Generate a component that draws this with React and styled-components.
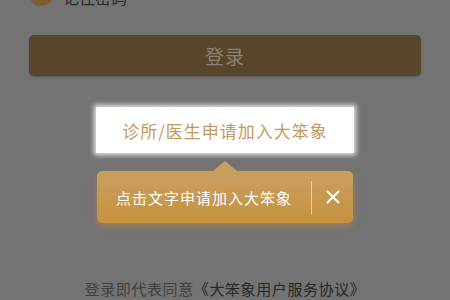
import React from "react";
import styled, { createGlobalStyle } from "styled-components";

const Global = createGlobalStyle`
  html, body { margin: 0; padding: 0; background: #737373; }
  body { font-family: "Noto Sans CJK SC", "Noto Sans", sans-serif; }
  * { box-sizing: border-box; }
`;

const Screen = styled.div`
  width: 450px;
  height: 300px;
  overflow: hidden;
  background: #737373;
  display: flex;
  flex-direction: column;
`;

const RememberRow = styled.div`
  display: flex;
  align-items: center;
  gap: 10px;
  height: 24px;
  margin: -18px 0 0 29px;
`;

const CheckCircle = styled.span`
  width: 24px;
  height: 24px;
  border-radius: 50%;
  background: #7a5f34;
  display: flex;
  align-items: center;
  justify-content: center;
`;

const RememberText = styled.span`
  font-size: 16px;
  line-height: 24px;
  color: #262626;
  margin-top: 5px;
`;

const LoginButton = styled.button`
  margin: 29px 29px 0;
  height: 41px;
  border: none;
  border-radius: 5px;
  background: #58462a;
  box-shadow: 0 1px 2px rgba(0, 0, 0, 0.25);
  color: #8b8276;
  font-family: inherit;
  font-size: 19px;
  letter-spacing: 1px;
  display: flex;
  align-items: center;
  justify-content: center;
  padding: 0;
`;

const Spotlight = styled.div`
  align-self: center;
  margin-top: 31px;
  width: 258px;
  height: 46px;
  background: #ffffff;
  box-shadow: 0 0 5px 2px rgba(255, 255, 255, 0.85);
  display: flex;
  align-items: center;
  justify-content: center;
  color: #c49a5c;
  font-size: 17px;
  letter-spacing: 1px;
`;

const Tip = styled.div`
  align-self: center;
  margin-top: 8px;
  display: flex;
  flex-direction: column;
  align-items: center;
`;

const Arrow = styled.div`
  width: 0;
  height: 0;
  border-left: 12px solid transparent;
  border-right: 12px solid transparent;
  border-bottom: 10px solid #c9a062;
`;

const TipBox = styled.div`
  width: 256px;
  height: 52px;
  border-radius: 5px;
  background: linear-gradient(180deg, #c9a062 0%, #c6913d 100%);
  box-shadow: 0 3px 8px rgba(205, 150, 60, 0.45);
  display: flex;
  align-items: center;
  padding-left: 19px;
`;

const TipText = styled.span`
  flex: 1;
  color: #ffffff;
  font-size: 15px;
  letter-spacing: 1px;
`;

const Divider = styled.span`
  width: 1px;
  height: 33px;
  background: rgba(245, 225, 185, 0.75);
`;

const CloseButton = styled.span`
  width: 41px;
  display: flex;
  align-items: center;
  justify-content: center;
`;

const Footer = styled.div`
  margin-top: auto;
  height: 22px;
  line-height: 22px;
  text-align: center;
  font-size: 15px;
  letter-spacing: 0.6px;
  color: #3f3f3f;
  padding-bottom: 1px;
`;

const Agreement = styled.span`
  color: #262626;
`;

export default function App() {
  return (
    <>
      <Global />
      <Screen>
        <RememberRow>
          <CheckCircle>
            <svg width="14" height="14" viewBox="0 0 14 14">
              <path d="M2.5 7.2 L5.8 10.2 L11.5 3.8" fill="none" stroke="#8a7b62" strokeWidth="1.8" />
            </svg>
          </CheckCircle>
          <RememberText>记住密码</RememberText>
        </RememberRow>
        <LoginButton>登录</LoginButton>
        <Spotlight>诊所/医生申请加入大笨象</Spotlight>
        <Tip>
          <Arrow />
          <TipBox>
            <TipText>点击文字申请加入大笨象</TipText>
            <Divider />
            <CloseButton>
              <svg width="14" height="14" viewBox="0 0 14 14">
                <path d="M1.5 1.5 L12.5 12.5 M12.5 1.5 L1.5 12.5" stroke="#ffffff" strokeWidth="2" strokeLinecap="round" />
              </svg>
            </CloseButton>
          </TipBox>
        </Tip>
        <Footer>
          登录即代表同意<Agreement>《大笨象用户服务协议》</Agreement>
        </Footer>
      </Screen>
    </>
  );
}
